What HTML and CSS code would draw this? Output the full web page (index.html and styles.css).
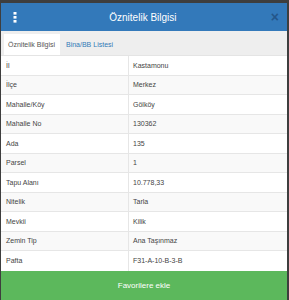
FILE: index.html
```html
<!DOCTYPE html>
<html lang="tr">
<head>
<meta charset="utf-8">
<link rel="stylesheet" href="styles.css">
</head>
<body>
<div class="modal">
  <div class="header">
    <svg class="kebab" width="4" height="11" viewBox="0 0 4 11"><rect x="0.5" y="0" width="3" height="2.6" fill="#fff"/><rect x="0.5" y="4" width="3" height="2.6" fill="#fff"/><rect x="0.5" y="8" width="3" height="2.6" fill="#fff"/></svg>
    <div class="title">Öznitelik Bilgisi</div>
    <div class="close">×</div>
  </div>
  <div class="tabs">
    <div class="tab active">Öznitelik Bilgisi</div>
    <div class="tab">Bina/BB Listesi</div>
  </div>
  <div class="table">
    <div class="row"><div class="k">İl</div><div class="v">Kastamonu</div></div>
    <div class="row"><div class="k">İlçe</div><div class="v">Merkez</div></div>
    <div class="row"><div class="k">Mahalle/Köy</div><div class="v">Gölköy</div></div>
    <div class="row"><div class="k">Mahalle No</div><div class="v">130362</div></div>
    <div class="row"><div class="k">Ada</div><div class="v">135</div></div>
    <div class="row"><div class="k">Parsel</div><div class="v">1</div></div>
    <div class="row"><div class="k">Tapu Alanı</div><div class="v">10.778,33</div></div>
    <div class="row"><div class="k">Nitelik</div><div class="v">Tarla</div></div>
    <div class="row"><div class="k">Mevkii</div><div class="v">Kilik</div></div>
    <div class="row"><div class="k">Zemin Tip</div><div class="v">Ana Taşınmaz</div></div>
    <div class="row"><div class="k">Pafta</div><div class="v">F31-A-10-B-3-B</div></div>
  </div>
  <div class="fav">Favorilere ekle</div>
</div>
</body>
</html>
```
FILE: styles.css
```css
html, body {
  margin: 0;
  padding: 0;
  background: #3e3e3e;
  height: 300px;
  overflow: hidden;
}
body {
  padding: 3px 2px 0 1px;
  font-family: "Liberation Sans", Arial, sans-serif;
}
.modal {
  background: #fff;
  height: 297px;
  display: flex;
  flex-direction: column;
}
.header {
  background: #3379ba;
  height: 28px;
  display: flex;
  align-items: center;
  padding: 0 8px 0 12px;
}
.kebab {
  display: block;
}
.title {
  flex: 1;
  text-align: center;
  color: #fff;
  font-size: 10px;
  padding-right: 2px;
}
.close {
  color: #24568a;
  font-size: 14px;
  font-weight: bold;
  line-height: 1;
  margin-top: -1px;
}
.tabs {
  background: #eeeeee;
  height: 24px;
  display: flex;
  align-items: flex-end;
  padding-left: 3px;
  border-bottom: 1px solid #e4e4e4;
}
.tab {
  font-size: 7px;
  height: 21px;
  line-height: 21px;
  padding: 0 4px 0 4px;
  color: #337ab7;
}
.tab.active {
  background: #fff;
  color: #555;
  width: 48px;
}
.tab + .tab {
  padding-left: 6px;
}
.table {
  display: flex;
  flex-direction: column;
}
.row {
  display: flex;
  height: 19.5px;
  box-sizing: border-box;
  border-bottom: 1px solid #e6e6e6;
  font-size: 7px;
  color: #444;
}
.row:nth-child(even) {
  background: #f9f9f9;
}
.row:last-child {
  border-bottom: none;
}
.k {
  width: 128px;
  padding-left: 5px;
  box-sizing: border-box;
  border-right: 1px solid #e6e6e6;
  display: flex;
  align-items: center;
}
.v {
  flex: 1;
  padding-left: 4px;
  display: flex;
  align-items: center;
}
.fav {
  flex: 1;
  background: #5cb85c;
  color: #fff;
  font-size: 8px;
  display: flex;
  align-items: center;
  justify-content: center;
}
```
